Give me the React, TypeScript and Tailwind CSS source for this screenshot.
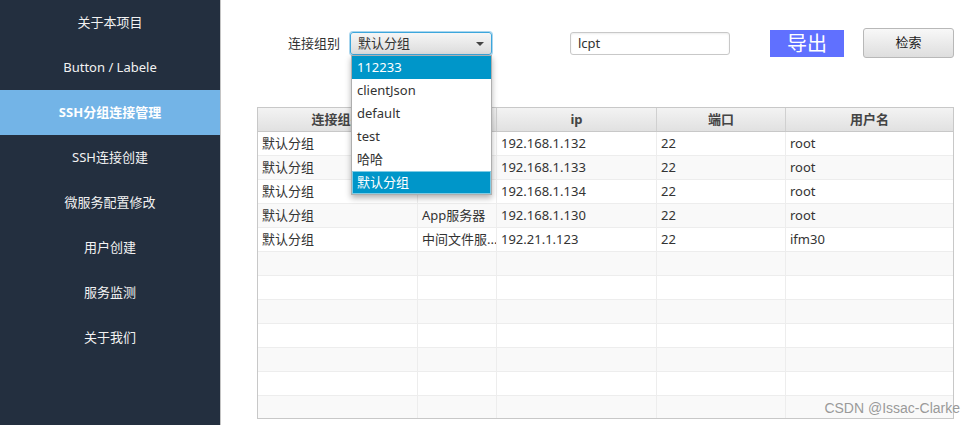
import React from "react";

const menu = ["关于本项目", "Button / Labele", "SSH分组连接管理", "SSH连接创建", "微服务配置修改", "用户创建", "服务监测", "关于我们"];

const rows: string[][] = [
  ["默认分组", "", "192.168.1.132", "22", "root"],
  ["默认分组", "", "192.168.1.133", "22", "root"],
  ["默认分组", "", "192.168.1.134", "22", "root"],
  ["默认分组", "App服务器", "192.168.1.130", "22", "root"],
  ["默认分组", "中间文件服...", "192.21.1.123", "22", "ifm30"],
];

const cols = ["w-[160px]", "w-[79px]", "w-[160px]", "w-[129px]", "flex-1"];
const heads = ["连接组别", "名称", "ip", "端口", "用户名"];
const options = ["112233", "clientJson", "default", "test", "哈哈", "默认分组"];

export default function App() {
  const all = Array.from({ length: 12 }).map((_, i) => rows[i] ?? ["", "", "", "", ""]);
  return (
    <div className="flex h-[425px] w-[976px] overflow-hidden bg-white text-[13px] text-[#333]" style={{ fontFamily: '"Noto Sans", "Noto Sans CJK SC", sans-serif' }}>
      {/* sidebar */}
      <div className="w-[221px] shrink-0 border-r border-[#c4c4c4] bg-[#232f3f]">
        {menu.map((m, i) => (
          <div
            key={m}
            className={
              i === 2
                ? "flex h-[45px] items-center justify-center bg-[#73b4e7] font-bold text-white"
                : "flex h-[45px] items-center justify-center text-[#f2f2f2]"
            }
          >
            {m}
          </div>
        ))}
      </div>

      {/* main */}
      <div className="relative flex-1 pl-[36px] pr-[21px]">
        <div className="flex h-[107px] items-start pt-[28px]">
          <span className="ml-[31px] mt-[6px] w-[62px] text-[#333]">连接组别</span>
          <div className="mt-[4px] flex h-[23px] w-[142px] items-center justify-between rounded-[3px] border border-[#3ca6dc] bg-gradient-to-b from-[#f6f6f6] to-[#dcdcdc] pl-[7px] pr-[7px] shadow-[0_0_0_1px_#aad6ee]">
            <span>默认分组</span>
            <span className="h-0 w-0 border-x-[4px] border-t-[4px] border-x-transparent border-t-[#444]" />
          </div>
          <div className="ml-[78px] mt-[4px] flex h-[23px] w-[160px] items-center rounded-[3px] border border-[#c8c8c8] bg-white pl-[7px] shadow-[inset_0_1px_2px_rgba(0,0,0,0.08)]">
            lcpt
          </div>
          <button className="ml-[40px] mt-[2px] flex h-[27px] w-[74px] items-center justify-center bg-[#6070ff] text-[20px] leading-none text-white">
            导出
          </button>
          <button className="ml-[19px] flex h-[30px] w-[91px] items-center justify-center rounded-[3px] border border-[#b8b8b8] bg-gradient-to-b from-[#f8f8f8] to-[#dedede] text-[#222]">
            检索
          </button>
        </div>

        {/* table */}
        <div className="h-[312px] w-[697px] overflow-hidden border border-[#c8c8c8]">
          <div className="flex h-[24px] border-b border-[#c8c8c8] bg-gradient-to-b from-[#f3f3f3] to-[#e1e1e1] font-bold text-[#444]">
            {heads.map((h, i) => (
              <div key={h} className={`${cols[i]} flex items-center justify-center border-r border-[#d0d0d0] last:border-r-0`}>
                {h}
              </div>
            ))}
          </div>
          {all.map((r, ri) => (
            <div key={ri} className={`flex h-[24px] border-b border-[#ededed] ${ri % 2 === 0 ? "bg-white" : "bg-[#f9f9f9]"}`}>
              {r.map((c, ci) => (
                <div key={ci} className={`${cols[ci]} flex items-center truncate border-r border-[#ededed] px-[4px] last:border-r-0`}>
                  {c}
                </div>
              ))}
            </div>
          ))}
        </div>

        {/* dropdown */}
        <div className="absolute left-[130px] top-[55px] w-[141px] border border-[#aeaeae] bg-white shadow-[0_3px_6px_rgba(0,0,0,0.3)]">
          {options.map((o, i) => (
            <div
              key={o}
              className={
                i === 0
                  ? "flex h-[23px] items-center bg-[#0096c9] px-[5px] text-white"
                  : i === 5
                  ? "flex h-[23px] items-center border border-[#7fcbe4] bg-[#0096c9] px-[4px] text-white"
                  : "flex h-[23px] items-center px-[5px] text-[#333]"
              }
            >
              {o}
            </div>
          ))}
        </div>

        <div className="absolute bottom-[6px] right-[16px] text-[14px] text-[#9a9a9a]" style={{ fontFamily: '"Liberation Sans", sans-serif' }}>
          CSDN @Issac-Clarke
        </div>
      </div>
    </div>
  );
}
